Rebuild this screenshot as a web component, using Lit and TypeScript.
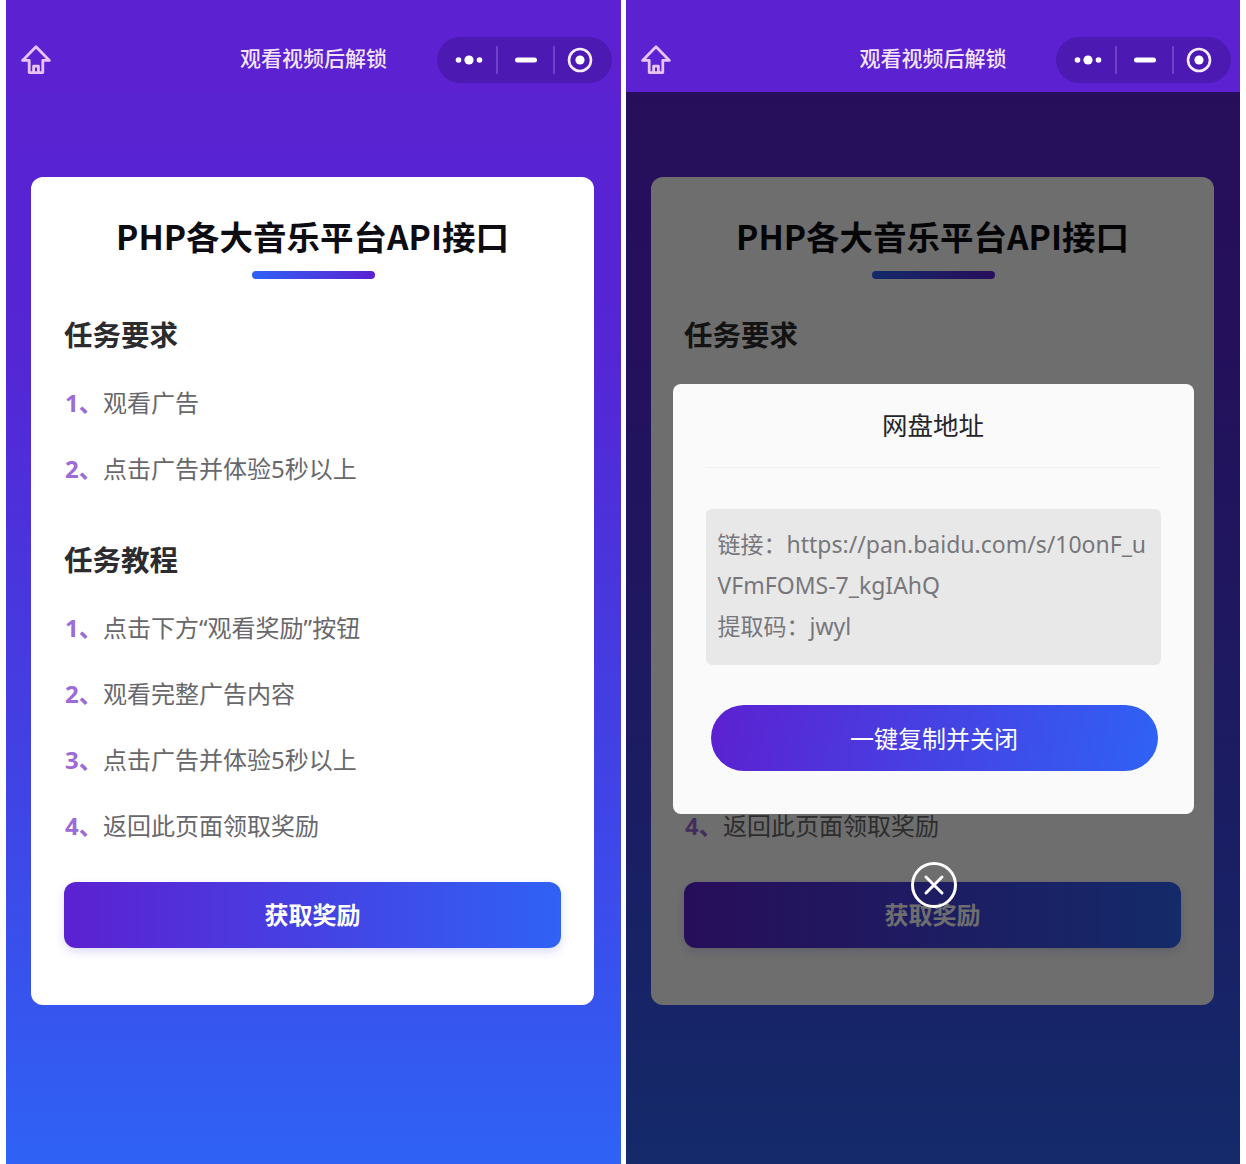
import { LitElement, html, css } from "lit";
import { customElement, property } from "lit/decorators.js";

const homeIcon = html`<svg class="home" viewBox="0 0 30 30" width="30" height="30" fill="none" stroke="currentColor" stroke-width="2.8" stroke-linejoin="round" stroke-linecap="round"><path d="M15 1.8 1.6 15.4h6.6V27.6h13.6V15.4h6.6Z"/><path d="M12.6 27.6v-6.4h4.8v6.4"/></svg>`;

@customElement("phone-screen")
class PhoneScreen extends LitElement {
  @property({ type: Boolean }) modal = false;

  static styles = css`
    :host { display: block; height: 1164px; position: relative; overflow: hidden;
      background: linear-gradient(180deg, #5c21d1 0%, #5426d4 30%, #3f45e6 70%, #2f62f5 100%);
      font-family: "Noto Sans CJK SC", "Noto Sans", sans-serif; }
    .nav { height: 92px; display: grid; grid-template-columns: 1fr auto 1fr; align-items: center; padding-top: 28px; position: relative; background: #5c21d1; box-sizing: border-box; }
    .nav-home { color: #e6c4fa; display: flex; align-items: center; margin-left: 15px; }
    .nav-title { color: #f3e4fb; font-size: 21px; font-weight: 500; margin-top: -6px; line-height: 30px; }
    .capsule { justify-self: end; margin-right: 9px; display: flex; width: 175px; height: 46px; border-radius: 23px; background: rgba(40, 10, 110, 0.3); align-items: center; }
    .cap-cell { height: 28px; display: flex; align-items: center; justify-content: center; }
    .cap-cell + .cap-cell { border-left: 2px solid rgba(190, 140, 240, 0.35); }
    .c1 { width: 59px; box-sizing: border-box; padding-left: 5px; }
    .c2 { width: 55px; }
    .c3 { width: 57px; box-sizing: border-box; padding-right: 6px; }
    .card { margin: 85px 0 0 25px; width: 563px; box-sizing: border-box; background: #fff; border-radius: 12px; padding: 36px 33px 57px; }
    h1 { margin: 0; height: 50px; font-size: 33.5px; line-height: 46px; font-weight: 700; text-align: center; color: #0c0c12; }
    .bar { width: 123px; height: 8px; border-radius: 4px; margin: 8px 0 0 188px; background: linear-gradient(90deg, #2f62f5, #5c21d1); }
    h2 { margin: 36px 0 15px; height: 40px; font-size: 28.5px; line-height: 38px; font-weight: 700; color: #2c2c30; }
    h2.second { margin-top: 38px; }
    .item { display: flex; height: 66px; box-sizing: border-box; padding-bottom: 4px; align-items: center; font-size: 24px; color: #68686c; white-space: nowrap; font-family: "Noto Sans", "Noto Sans CJK SC", sans-serif; }
    .num { width: 38px; margin-left: 1px; font-weight: 700; color: #9c6bd8; flex: none; }
    .cta { margin-top: 23px; height: 66px; box-sizing: border-box; padding-bottom: 4px; border-radius: 12px; display: flex; align-items: center; justify-content: center; color: #fff; font-size: 24px; font-weight: 700; background: linear-gradient(90deg, #5c21d1, #2f62f5); box-shadow: 0 4px 10px rgba(60, 60, 200, 0.18); }
    .overlay { position: absolute; left: 0; right: 0; top: 92px; bottom: 0; background: rgba(0, 0, 0, 0.57); display: flex; flex-direction: column; align-items: center; padding-top: 292px; }
    .modal { width: 521px; height: 430px; box-sizing: border-box; background: #fafafa; border-radius: 8px; padding: 0 33px; }
    .m-title { height: 84px; box-sizing: border-box; padding-bottom: 5px; display: flex; align-items: center; justify-content: center; font-size: 25.5px; color: #26262a; border-bottom: 1px solid #f0f0f0; }
    .m-box { margin-top: 41px; width: 455px; height: 156px; box-sizing: border-box; padding: 15px 12px; background: #e8e8e8; border-radius: 6px; font-size: 23px; line-height: 41px; color: #77777b; word-break: break-all; font-family: "Noto Sans", "Noto Sans CJK SC", sans-serif; }
    .m-btn { margin: 40px 3px 0 5px; height: 66px; box-sizing: border-box; padding-bottom: 2px; border-radius: 33px; display: flex; align-items: center; justify-content: center; color: #fff; font-size: 24px; background: linear-gradient(100deg, #5c21d1, #2f62f5); }
    .close { margin: 48px 0 0 1px; width: 46px; height: 46px; flex: none; }
  `;

  render() {
    return html`
      <div class="nav">
        <div class="nav-home">${homeIcon}</div>
        <div class="nav-title">观看视频后解锁</div>
        <div class="capsule">
          <div class="cap-cell c1"><svg width="30" height="14" viewBox="0 0 30 14" fill="#fff"><circle cx="4.5" cy="7" r="2.8"/><circle cx="15" cy="7" r="4.6"/><circle cx="25.5" cy="7" r="2.8"/></svg></div>
          <div class="cap-cell c2"><svg width="22" height="6" viewBox="0 0 22 6"><rect width="22" height="5" y=".5" rx="2.5" fill="#fff"/></svg></div>
          <div class="cap-cell c3"><svg width="28" height="28" viewBox="0 0 28 28" fill="none"><circle cx="14" cy="14" r="11" stroke="#f6ebff" stroke-width="2.6"/><circle cx="14" cy="14" r="4.6" fill="#fff"/></svg></div>
        </div>
      </div>
      <div class="card">
        <h1>PHP各大音乐平台API接口</h1>
        <div class="bar"></div>
        <h2>任务要求</h2>
        <div class="item"><span class="num">1、</span>观看广告</div>
        <div class="item"><span class="num">2、</span>点击广告并体验5秒以上</div>
        <h2 class="second">任务教程</h2>
        <div class="item"><span class="num">1、</span>点击下方“观看奖励”按钮</div>
        <div class="item"><span class="num">2、</span>观看完整广告内容</div>
        <div class="item"><span class="num">3、</span>点击广告并体验5秒以上</div>
        <div class="item"><span class="num">4、</span>返回此页面领取奖励</div>
        <div class="cta">获取奖励</div>
      </div>
      ${this.modal ? html`
        <div class="overlay">
          <div class="modal">
            <div class="m-title">网盘地址</div>
            <div class="m-box">链接：https://pan.baidu.com/s/10onF_uVFmFOMS-7_kgIAhQ<br />提取码：jwyl</div>
            <div class="m-btn">一键复制并关闭</div>
          </div>
          <svg class="close" viewBox="0 0 46 46" fill="none" stroke="#fff" stroke-linecap="round"><circle cx="23" cy="23" r="21.5" stroke-width="3"/><path d="M15 15l16 16M31 15 15 31" stroke-width="3"/></svg>
        </div>` : ""}
    `;
  }
}

@customElement("app-root")
class AppRoot extends LitElement {
  static styles = css`
    :host { display: grid; grid-template-columns: 615px 614px; column-gap: 5px; padding: 0 6px; height: 1164px; background: #fff; overflow: hidden; }
  `;
  render() {
    return html`<phone-screen></phone-screen><phone-screen modal></phone-screen>`;
  }
}
